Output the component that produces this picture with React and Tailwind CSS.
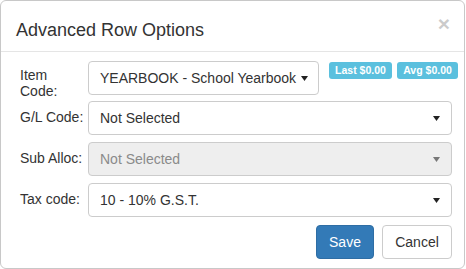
import React from "react";

function Caret({ color = "#333" }) {
  return (
    <svg width="7" height="5" viewBox="0 0 7 5" className="shrink-0">
      <polygon points="0,0 7,0 3.5,5" fill={color} />
    </svg>
  );
}

function SelectBox({ value, disabled }) {
  return (
    <div
      className={`flex-1 h-[34px] flex items-center justify-between pl-[11px] pr-[11px] border border-[#cccccc] rounded-[4px] ${
        disabled ? "bg-[#eeeeee] text-[#8a8a8a]" : "bg-white text-[#333333]"
      }`}
    >
      <span>{value}</span>
      <Caret color={disabled ? "#777777" : "#222222"} />
    </div>
  );
}

function Label({ children, pt }) {
  return (
    <div className={`w-[65px] mr-[3px] shrink-0 leading-[16px] text-[#333333] ${pt}`}>
      {children}
    </div>
  );
}

export default function App() {
  return (
    <div className="w-[465px] h-[269px] bg-white border border-[#c8c8c8] rounded-[6px] font-['Liberation_Sans',Arial,sans-serif] text-[14px] text-[#333333] overflow-hidden">
      <div className="h-[51px] border-b border-[#e5e5e5] flex items-start justify-between pl-[15px] pr-[14px]">
        <div className="mt-[19px] text-[18px] leading-[20px] text-[#333333]">
          Advanced Row Options
        </div>
        <div className="mt-[12px] text-[21px] leading-[21px] font-bold text-[#000000] opacity-20">
          ×
        </div>
      </div>
      <div className="pl-[19px] pr-[12px] pt-[9px]">
        <div className="flex items-start h-[34px]">
          <Label pt="pt-[6px]">Item Code:</Label>
          <div className="w-[231px] shrink-0 h-[34px] flex items-center pl-[11px] border border-[#cccccc] rounded-[4px] bg-white">
            <span>YEARBOOK - School Yearbook</span>
            <span className="ml-[5px] flex items-center">
              <Caret color="#222222" />
            </span>
          </div>
          <div className="flex gap-[5px] ml-[10px] mt-[1px] shrink-0">
            <span className="w-[63px] h-[17px] rounded-[3px] bg-[#5bc0de] text-white text-[10.5px] font-bold leading-[17px] text-center">
              Last $0.00
            </span>
            <span className="w-[61px] h-[17px] rounded-[3px] bg-[#5bc0de] text-white text-[10.5px] font-bold leading-[17px] text-center">
              Avg $0.00
            </span>
          </div>
        </div>
        <div className="flex items-start mt-[6px]">
          <Label pt="pt-[8px]">G/L Code:</Label>
          <SelectBox value="Not Selected" />
        </div>
        <div className="flex items-start mt-[7px]">
          <Label pt="pt-[8px]">Sub Alloc:</Label>
          <SelectBox value="Not Selected" disabled />
        </div>
        <div className="flex items-start mt-[7px]">
          <Label pt="pt-[8px]">Tax code:</Label>
          <SelectBox value="10 - 10% G.S.T." />
        </div>
        <div className="flex justify-end gap-[8px] mt-[8px]">
          <button className="w-[58px] h-[34px] rounded-[4px] bg-[#337ab7] border border-[#2e6da4] text-white text-[14px]">
            Save
          </button>
          <button className="w-[70px] h-[34px] rounded-[4px] bg-white border border-[#cccccc] text-[#333333] text-[14px]">
            Cancel
          </button>
        </div>
      </div>
    </div>
  );
}
